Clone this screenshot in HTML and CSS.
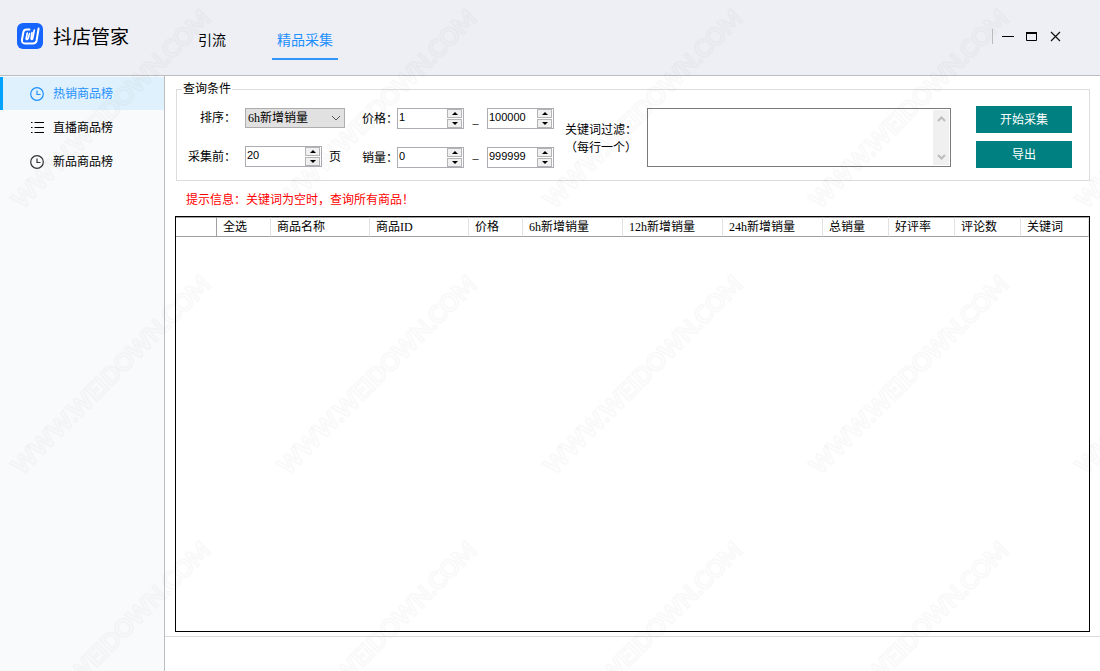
FILE: index.html
```html
<!DOCTYPE html>
<html lang="zh-CN">
<head>
<meta charset="utf-8">
<title>抖店管家</title>
<link rel="stylesheet" href="styles.css">
</head>
<body>
<div class="app">
  <header class="topbar">
    <div class="brand">
      <svg class="logo" viewBox="0 0 26 26" aria-hidden="true">
        <rect width="26" height="26" rx="6" fill="#1765ff"/>
        <g fill="none" stroke="#fff" stroke-linecap="round" stroke-linejoin="round">
          <path stroke-width="2" d="M12.5 6.500H9.500C7.800 6.500 6.800 7.400 6.400 9L5 16.500C4.600 19.200 5.700 20.500 8 20.500H16C18 20.500 19.200 19.500 19.600 17.500L21.600 5.500"/>
          <path stroke-width="1.600" d="M10.300 10L9.200 15.500C9 16.700 10.500 16.800 11 15.700L12.600 10.500M17.300 7L15.700 15.500C15.300 16.900 13.900 16.500 14.100 15.300L15 9.500"/>
        </g>
      </svg>
      <h1 class="title">抖店管家</h1>
    </div>
    <nav class="tabs">
      <a class="tab" href="#traffic">引流</a>
      <a class="tab tab-active" href="#collect">精品采集</a>
    </nav>
    <div class="window-controls">
      <button class="win-btn" type="button" aria-label="最小化"><svg viewBox="0 0 12 12"><path d="M0 5.500h12" stroke="#000"/></svg></button>
      <button class="win-btn" type="button" aria-label="最大化"><svg viewBox="0 0 12 12"><path d="M.5 2v7.500h10V2" fill="none" stroke="#000"/><path d="M0 2h11" stroke="#000" stroke-width="2"/></svg></button>
      <button class="win-btn" type="button" aria-label="关闭"><svg viewBox="0 0 12 12"><path d="M1 1l9 9M10 1l-9 9" stroke="#111" stroke-width="1.200"/></svg></button>
    </div>
  </header>

  <div class="body">
    <nav class="sidebar">
      <a class="side-item side-active" href="#hot">
        <svg viewBox="0 0 14 14" fill="none" stroke="currentColor" stroke-width="1.200"><circle cx="7" cy="7" r="6.300"/><path d="M7 3.500V7.500h3.500"/></svg>热销商品榜</a>
      <a class="side-item" href="#live">
        <svg viewBox="0 0 14 14" fill="none" stroke="currentColor"><path d="M4.500 1.500H14M4.500 6.500H14M4.500 11.500H14M1 1.500h1.500M1 6.500h1.500M1 11.500h1.500"/></svg>直播商品榜</a>
      <a class="side-item" href="#new">
        <svg viewBox="0 0 14 14" fill="none" stroke="#333" stroke-width="1.200"><circle cx="7" cy="7" r="6.300"/><path d="M7 3.500V7.500h3.500"/></svg>新品商品榜</a>
    </nav>

    <main class="main">
      <div class="content">
        <fieldset class="query">
          <legend>查询条件</legend>
          <div class="query-row">
            <div class="basic">
              <label class="right" for="sort">排序：</label>
              <div class="select-box">
                <select id="sort"><option>6h新增销量</option></select>
                <svg viewBox="0 0 10 6" aria-hidden="true"><path d="M1 1l4 4 4-4" fill="none" stroke="#555"/></svg>
              </div>
              <label class="right" for="pages">采集前：</label>
              <div class="pages">
                <div class="spin spin-wide">
                  <input id="pages" type="number" value="20">
                  <div class="steps"><button type="button" aria-label="增加"></button><button type="button" aria-label="减少"></button></div>
                </div>
                <span>页</span>
              </div>
            </div>
            <div class="ranges">
              <label for="price-min">价格：</label>
              <div class="spin">
                <input id="price-min" type="number" value="1">
                <div class="steps"><button type="button" aria-label="增加"></button><button type="button" aria-label="减少"></button></div>
              </div>
              <span class="dash">_</span>
              <div class="spin">
                <input aria-label="最高价格" type="number" value="100000">
                <div class="steps"><button type="button" aria-label="增加"></button><button type="button" aria-label="减少"></button></div>
              </div>
              <label for="sales-min">销量：</label>
              <div class="spin">
                <input id="sales-min" type="number" value="0">
                <div class="steps"><button type="button" aria-label="增加"></button><button type="button" aria-label="减少"></button></div>
              </div>
              <span class="dash">–</span>
              <div class="spin">
                <input aria-label="最高销量" type="number" value="999999">
                <div class="steps"><button type="button" aria-label="增加"></button><button type="button" aria-label="减少"></button></div>
              </div>
            </div>
            <label class="filter-label" for="filter">关键词过滤：<br>（每行一个）</label>
            <div class="filter-box">
              <textarea id="filter"></textarea>
              <div class="scrollbar" aria-hidden="true">
                <svg viewBox="0 0 9 6"><path d="M1 5l3.500-3.500L8 5" fill="none" stroke="#bdbdbd" stroke-width="2"/></svg>
                <svg viewBox="0 0 9 6"><path d="M1 1l3.500 3.500L8 1" fill="none" stroke="#bdbdbd" stroke-width="2"/></svg>
              </div>
            </div>
            <div class="actions">
              <button type="button">开始采集</button>
              <button type="button">导出</button>
            </div>
          </div>
        </fieldset>
        <p class="hint">提示信息：关键词为空时，查询所有商品！</p>
        <div class="grid-box">
          <table class="grid">
            <colgroup><col class="w-mark"><col class="w-s"><col class="w-name"><col class="w-name"><col class="w-s"><col class="w-l"><col class="w-l"><col class="w-l"><col class="w-m"><col class="w-m"><col class="w-m"><col></colgroup>
            <thead><tr><th></th><th>全选</th><th>商品名称</th><th>商品ID</th><th>价格</th><th>6h新增销量</th><th>12h新增销量</th><th>24h新增销量</th><th>总销量</th><th>好评率</th><th>评论数</th><th>关键词</th></tr></thead>
          </table>
        </div>
      </div>
      <footer class="status"></footer>
    </main>
  </div>
  <svg class="watermark" aria-hidden="true">
    <defs>
      <pattern id="wm" width="266" height="266" patternUnits="userSpaceOnUse">
        <text class="wm-text" transform="translate(22 210) rotate(-45)">WWW.WEIDOWN.COM</text>
      </pattern>
    </defs>
    <rect width="100%" height="100%" fill="url(#wm)"/>
  </svg>
</div>
</body>
</html>
```

FILE: styles.css
```css
* {
  box-sizing: border-box;
}

body {
  margin: 0;
  color: #000;
  background: #fff;
  font: 12px/18px "Liberation Serif", "Noto Sans CJK SC", sans-serif;
}

button,
input,
select,
textarea {
  margin: 0;
  padding: 0;
  border: 0;
  border-radius: 0;
  color: inherit;
  font: inherit;
}

a {
  color: inherit;
  text-decoration: none;
}

.app {
  position: relative;
  display: flex;
  flex-direction: column;
  min-height: 100vh;
}

.topbar {
  display: flex;
  height: 76px;
  border-bottom: 1px solid #bcbdc1;
  background: #eeeff5;
}

.brand {
  display: flex;
  align-items: center;
  gap: 10px;
  width: 193px;
  padding: 0 0 3px 17px;
}

.logo {
  width: 26px;
  height: 26px;
}

.title {
  margin: 0;
  font: 400 19px/26px "Noto Sans CJK SC", sans-serif;
}

.tabs {
  display: flex;
  align-items: flex-end;
  gap: 41px;
  padding-bottom: 15px;
  font-size: 14px;
}

.tab {
  padding: 0 5px 7px;
  border-bottom: 2px solid transparent;
  line-height: 20px;
}

.tab-active {
  border-color: #3296fa;
  color: #1e90ff;
}

.window-controls {
  display: flex;
  align-items: center;
  gap: 12px;
  height: 15px;
  margin: 29px 38px 0 auto;
  padding-left: 9px;
  border-left: 1px solid #bbb;
}

.win-btn {
  width: 12px;
  height: 12px;
  background: none;
}

.win-btn svg {
  display: block;
}

.body {
  display: flex;
  flex: 1;
}

.sidebar {
  display: flex;
  flex-direction: column;
  gap: 1px;
  width: 165px;
  padding-top: 1px;
  border-right: 1px solid #bcbdc1;
  background: #f9fafc;
}

.side-item {
  display: flex;
  align-items: center;
  gap: 9px;
  height: 33px;
  padding-left: 27px;
  border-left: 3px solid transparent;
}

.side-item svg {
  width: 14px;
  height: 14px;
}

.side-active {
  border-color: #00a2ff;
  background: #dff1fc;
  color: #1e90ff;
}

.main {
  display: flex;
  flex: 1;
  flex-direction: column;
  min-width: 0;
}

.content {
  display: flex;
  flex: 1;
  flex-direction: column;
  padding: 4px 10px;
}

.query {
  min-width: 0;
  margin: 0 0 0 1px;
  padding: 8px 17px 12px 11px;
  border: 1px solid #dcdcdc;
}

.query legend {
  margin-left: -6px;
  padding: 0 1px;
  line-height: 18px;
}

.query-row {
  display: flex;
  align-items: center;
}

.query label {
  white-space: nowrap;
}

.basic,
.ranges {
  display: grid;
  grid-auto-rows: 21px;
  row-gap: 18px;
  align-items: center;
}

.basic {
  grid-template-columns: 48px auto;
  column-gap: 9px;
  margin-right: 17px;
}

.right {
  text-align: right;
}

.select-box {
  position: relative;
  width: 100px;
  height: 20px;
}

.select-box select {
  width: 100%;
  height: 100%;
  padding-left: 2px;
  border: 1px solid #adadad;
  background: #e1e1e1;
  appearance: none;
}

.select-box svg {
  position: absolute;
  top: 7px;
  right: 4px;
  width: 10px;
  height: 6px;
}

.pages {
  display: flex;
  align-items: center;
  gap: 7px;
}

.ranges {
  grid-template-columns: 28px 67px 9px 67px;
  column-gap: 7px;
  margin-right: 11px;
  padding-top: 2px;
}

.dash {
  text-align: center;
}

.spin {
  display: flex;
  width: 67px;
  height: 21px;
  padding-right: 1px;
  border: 1px solid #abadb3;
  background: #fff;
}

.spin-wide {
  width: 77px;
}

.spin input {
  flex: 1;
  min-width: 0;
  height: 16px;
  padding-left: 1px;
  background: none;
  font: 11px/16px "Liberation Sans", sans-serif;
  appearance: textfield;
}

.spin input::-webkit-inner-spin-button {
  appearance: none;
  margin: 0;
}

.steps {
  display: flex;
  flex-direction: column;
  gap: 1px;
  width: 15px;
}

.steps button {
  display: flex;
  flex: 1;
  align-items: center;
  justify-content: center;
  border: 1px solid #b4b4b4;
  background: #f0f0f0;
}

.steps button::before {
  content: "";
  border: 3px solid transparent;
  border-top: 0;
  border-bottom-color: #000;
}

.steps button:last-child::before {
  border-top: 3px solid #000;
  border-bottom: 0;
}

.filter-label {
  padding-top: 4px;
}

.filter-box {
  display: flex;
  flex: 1;
  min-width: 0;
  height: 59px;
  margin: 0 25px 0 10px;
  padding: 1px;
  border: 1px solid #7a7a7a;
  background: #fff;
}

.filter-box textarea {
  flex: 1;
  min-width: 0;
  resize: none;
}

.scrollbar {
  display: flex;
  flex-direction: column;
  align-items: center;
  justify-content: space-between;
  width: 16px;
  padding: 6px 0 5px;
  background: #f0f0f0;
}

.scrollbar svg {
  width: 9px;
  height: 6px;
}

.actions {
  display: grid;
  gap: 8px;
  width: 96px;
}

.actions button {
  height: 27px;
  background: #008080;
  color: #fff;
}

.hint {
  margin: 10px 0 7px 11px;
  color: #f00;
}

.grid-box {
  flex: 1;
  border: 1px solid #000;
}

.grid {
  width: 100%;
  border-spacing: 0;
  table-layout: fixed;
}

.grid th {
  height: 20px;
  padding: 1px 0 0 6px;
  border-top: 1px solid #a0a0a0;
  border-right: 1px solid #e2e2e2;
  border-bottom: 1px solid #a0a0a0;
  font-weight: 400;
  line-height: 17px;
  text-align: left;
  white-space: nowrap;
}

.grid th:first-child {
  border-right-color: #a0a0a0;
}

.w-mark {
  width: 41px;
}

.w-s {
  width: 54px;
}

.w-m {
  width: 66px;
}

.w-name {
  width: 99px;
}

.w-l {
  width: 100px;
}

.status {
  height: 35px;
  border-top: 1px solid #dcdcdc;
}

.watermark {
  position: absolute;
  inset: 0;
  width: 100%;
  height: 100%;
  pointer-events: none;
}

.wm-text {
  fill: none;
  stroke: #000;
  stroke-width: 2px;
  stroke-opacity: 0.025;
  font: 700 24px Lato, sans-serif;
}
```
